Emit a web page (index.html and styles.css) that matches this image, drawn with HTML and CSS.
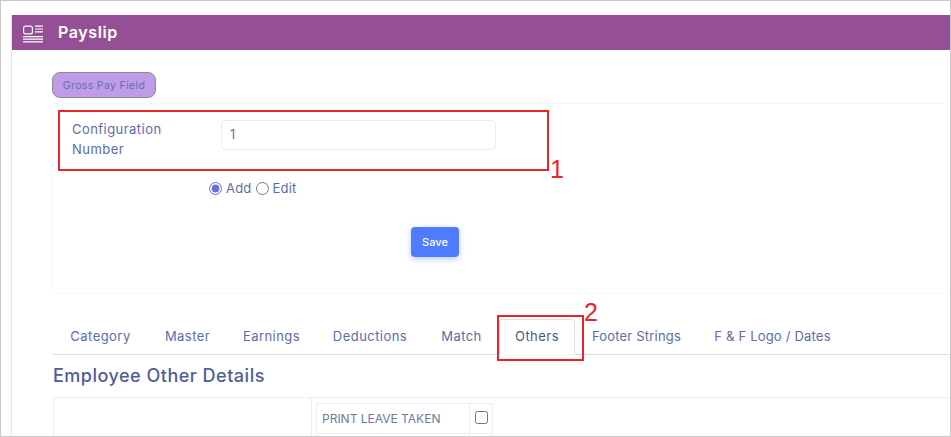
FILE: index.html
```html
<!DOCTYPE html>
<html lang="en">
	<head>
		<meta charset="UTF-8" />
		<meta name="viewport" content="width=device-width, initial-scale=1.0" />
		<title>Payslip</title>
		<link rel="stylesheet" href="styles.css">
	</head>
	<body>
		<div class="frame">
			<div class="card">
				<div class="card-header">
					<svg class="header-icon" width="20" height="18" viewBox="0 0 20 18" fill="none" stroke="#fff" stroke-width="1.2">
						<rect x="0.6" y="1.1" width="8.8" height="7.8" rx="2" />
						<path d="M12 1.2h8M12 4h8M12 6.8h8M0 11.6h20M0 14.2h20M0 16.8h20" />
					</svg>
					<h1 class="card-title">Payslip</h1>
				</div>

				<div class="card-body">
					<button type="button" class="field-btn">Gross Pay Field</button>

					<div class="config-panel">
						<div class="config-row">
							<label for="configNo" class="config-label">Configuration Number</label>
							<input type="text" id="configNo" class="config-input" value="1" />
						</div>
						<div class="mode-row">
							<input type="radio" name="mode" id="modeAdd" class="mode-radio" checked />
							<label for="modeAdd" class="mode-label">Add</label>
							<input type="radio" name="mode" id="modeEdit" class="mode-radio" />
							<label for="modeEdit" class="mode-label">Edit</label>
						</div>
						<div class="save-row">
							<button type="button" class="save-btn">Save</button>
						</div>
					</div>

					<ul class="tabs">
						<li class="tab">Category</li>
						<li class="tab">Master</li>
						<li class="tab">Earnings</li>
						<li class="tab">Deductions</li>
						<li class="tab">Match</li>
						<li class="tab tab-active">Others</li>
						<li class="tab tab-long">Footer Strings</li>
						<li class="tab tab-long">F &amp; F Logo / Dates</li>
					</ul>

					<h2 class="section-title">Employee Other Details</h2>

					<div class="details">
						<div class="details-left"></div>
						<div class="details-right">
							<table class="details-table">
								<tr>
									<td class="details-name">PRINT LEAVE TAKEN</td>
									<td class="details-check"><input type="checkbox" class="check" /></td>
								</tr>
								<tr>
									<td class="details-name">&nbsp;</td>
									<td class="details-check"></td>
								</tr>
							</table>
						</div>
					</div>
				</div>
			</div>

			<!-- annotations drawn on top of the screenshot -->
			<div class="mark mark-one"></div>
			<span class="mark-num num-one">1</span>
			<div class="mark mark-two"></div>
			<span class="mark-num num-two">2</span>
		</div>
	</body>
</html>
```

FILE: styles.css
```css
* {
	margin: 0;
	padding: 0;
	box-sizing: border-box;
}

html,
body {
	height: 437px;
	overflow: hidden;
	background: #fff;
}

body {
	font-family: Inter, 'Open Sans', sans-serif;
	color: #5c6bab;
}

.frame {
	position: relative;
	height: 437px;
	border: 1px solid #c8c8c8;
	padding: 14px 0 0 10px;
	overflow: hidden;
}

.card {
	border-left: 1px solid #e6e6e6;
}

.card-header {
	display: flex;
	align-items: center;
	height: 35px;
	padding-left: 11px;
	background: #954f95;
	color: #fff;
}

.header-icon {
	margin: 2px 15px 0 0;
}

.card-title {
	margin-bottom: 2px;
	font-size: 16px;
	font-weight: 600;
	letter-spacing: 0.6px;
}

.card-body {
	padding: 22px 0 0 40px;
}

.field-btn {
	display: block;
	width: 104px;
	height: 26px;
	background: #c09be6;
	border: 1px solid #8c8c96;
	border-radius: 8px;
	font-family: inherit;
	font-size: 10.5px;
	letter-spacing: 0.35px;
	color: #5f6fb8;
}

.config-panel {
	height: 191px;
	margin: 5px 0 0 -1px;
	border: 1px solid #f7f7f9;
	border-right: none;
	border-radius: 4px;
}

.config-row {
	display: flex;
	align-items: flex-start;
	padding: 16px 0 0 20px;
}

.config-label {
	width: 149px;
	margin-top: -1px;
	padding-right: 40px;
	font-size: 13px;
	letter-spacing: 0.45px;
	line-height: 20px;
}

.config-input {
	width: 275px;
	height: 30px;
	padding: 0 8px 2px;
	border: 1px solid #e8ebf5;
	border-radius: 4px;
	font-family: inherit;
	font-size: 12.5px;
	color: #5c6bab;
	outline: none;
}

.mode-row {
	display: flex;
	align-items: center;
	height: 20px;
	margin-top: 19px;
	padding-left: 156px;
	font-size: 13px;
	letter-spacing: 0.2px;
}

.mode-radio {
	width: 13px;
	height: 13px;
	margin: 0 4px 0 1px;
	accent-color: #6a6fdc;
}

.mode-label {
	margin-right: 3px;
}

.save-row {
	padding: 29px 0 0 359px;
}

.save-btn {
	display: block;
	width: 48px;
	height: 30px;
	background: #4f7cff;
	border: none;
	border-radius: 4px;
	box-shadow: 0 2px 6px rgba(79, 124, 255, 0.4);
	font-family: inherit;
	font-size: 11px;
	font-weight: 500;
	color: #fff;
}

.tabs {
	display: grid;
	grid-template-columns: 95px 79px 89px 108px 75px 76px 123px 149px;
	height: 36px;
	margin: 25px 0 0 1px;
	border-bottom: 1px solid #dddddd;
	list-style: none;
	font-size: 13px;
	letter-spacing: 0.45px;
}

.tab {
	padding-top: 8px;
	border: 1px solid transparent;
	text-align: center;
	white-space: nowrap;
}

.tab-long {
	letter-spacing: 0.2px;
}

.tab-active {
	margin-bottom: -1px;
	background: #fff;
	border-color: #e0e0e0;
	border-bottom-color: #fff;
	border-radius: 4px 4px 0 0;
	color: #495a8c;
}

.section-title {
	margin: 10px 0 0 1px;
	font-size: 18px;
	font-weight: 500;
	line-height: 21px;
	letter-spacing: 0.5px;
	color: #4d5e99;
}

.details {
	display: flex;
	height: 60px;
	margin-top: 11px;
	margin-left: 1px;
	border: 1px solid #e9eef6;
	border-right: none;
}

.details-left {
	width: 258px;
	border-right: 1px solid #e9eef6;
}

.details-right {
	padding: 5px 0 0 4px;
}

.details-table {
	border-collapse: collapse;
	font-size: 12px;
	color: #6a7aa8;
}

.details-table td {
	height: 30px;
	border: 1px solid #e9eef6;
}

.details-name {
	width: 153px;
	padding: 0 5px;
}

.details-check {
	width: 23px;
	text-align: center;
}

.check {
	display: block;
	width: 13px;
	height: 13px;
	margin: -3px auto 0;
}

.mark {
	position: absolute;
	border: 2px solid #e8262a;
}

.mark-one {
	left: 57px;
	top: 109px;
	width: 491px;
	height: 61px;
}

.mark-two {
	left: 496px;
	top: 314px;
	width: 87px;
	height: 46px;
}

.mark-num {
	position: absolute;
	font-family: 'Liberation Sans', sans-serif;
	font-size: 25px;
	line-height: 25px;
	color: #e8262a;
}

.num-one {
	left: 549px;
	top: 156px;
}

.num-two {
	left: 583px;
	top: 299px;
}
```
